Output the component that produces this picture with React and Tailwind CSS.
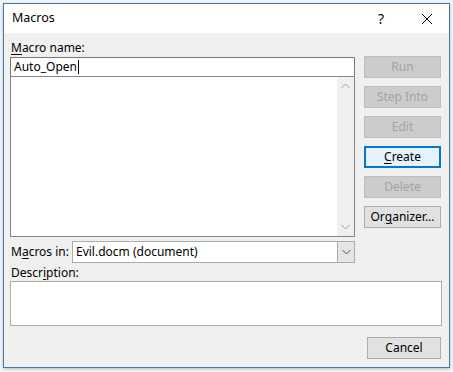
import React from 'react';

const font = { fontFamily: '"Noto Sans", "Open Sans", sans-serif' };

const Btn = ({ children, disabled, focused }) => (
  <div
    className={`h-[22px] flex items-center justify-center text-[12px] ${
      disabled
        ? 'bg-[#cccccc] border border-[#bfbfbf] text-[#a3a3a3]'
        : focused
        ? 'bg-[#e5f1fb] border-2 border-[#0078d7] text-black'
        : 'bg-[#e1e1e1] border border-[#adadad] text-black'
    }`}
  >
    {children}
  </div>
);

const Chevron = ({ up, color = '#a0a0a0' }) => (
  <svg width="9" height="6" viewBox="0 0 9 6">
    <path d={up ? 'M0.5 5 L4.5 1 L8.5 5' : 'M0.5 1 L4.5 5 L8.5 1'} fill="none" stroke={color} strokeWidth="1" />
  </svg>
);

export default function App() {
  return (
    <div className="w-[453px] h-[372px] bg-[#f3f6fa] p-[3px] pb-[4px]" style={font}>
      <div className="h-full flex flex-col border border-[#3f78b3] bg-[#f0f0f0] shadow-[0_1px_3px_rgba(0,0,0,0.25)]">
        {/* Title bar */}
        <div className="h-[29px] bg-white flex items-center pl-[8px] text-[12.5px] text-black">
          <span className="flex-1">Macros</span>
          <span className="w-[14px] text-center text-[14px] mr-[33px]">?</span>
          <svg width="12" height="12" viewBox="0 0 12 12" className="mr-[16px]">
            <path d="M1 1 L11 11 M11 1 L1 11" stroke="#000" strokeWidth="1" />
          </svg>
        </div>

        {/* Body */}
        <div className="flex-1 flex flex-col pl-[6px] pr-[7px]">
          <div className="flex gap-[9px]">
            <div className="w-[345px] flex flex-col">
              <div className="mt-[6px] h-[17px] leading-[17px] pl-px text-[12px]">
                <span className="underline underline-offset-2">M</span>acro name:
              </div>
              <div className="mt-px h-[20px] bg-white border border-[#7a7a7a] flex items-center pl-[3px] text-[12px]">
                Auto_Open
                <span className="inline-block w-px h-[14px] bg-black ml-px" />
              </div>
              <div className="-mt-px h-[161px] bg-white border border-[#828790] flex justify-end">
                <div className="w-[17px] bg-[#f0f0f0] flex flex-col items-center justify-between pt-[6px] pb-[6px]">
                  <Chevron up />
                  <Chevron />
                </div>
              </div>
            </div>
            <div className="w-[77px] flex flex-col gap-[8px] pt-[23px]">
              <Btn disabled>Run</Btn>
              <Btn disabled>Step Into</Btn>
              <Btn disabled>Edit</Btn>
              <Btn focused>
                <span className="underline underline-offset-2">C</span>reate
              </Btn>
              <Btn disabled>Delete</Btn>
              <Btn>
                Or<span className="underline underline-offset-2">g</span>anizer...
              </Btn>
            </div>
          </div>

          {/* Macros in */}
          <div className="mt-[4px] w-[345px] flex items-center text-[12px]">
            <div className="w-[62px] pl-px">
              M<span className="underline underline-offset-2">a</span>cros in:
            </div>
            <div className="flex-1 h-[22px] bg-white border border-[#adadad] flex items-center">
              <span className="flex-1 pl-[3px]">Evil.docm (document)</span>
              <div className="w-[17px] h-full bg-[#e5e5e5] border-l border-[#adadad] flex items-center justify-center">
                <Chevron color="#555555" />
              </div>
            </div>
          </div>

          {/* Description */}
          <div className="mt-px h-[17px] leading-[17px] pl-px text-[12px]">
            Descr<span className="underline underline-offset-2">i</span>ption:
          </div>
          <div className="h-[45px] bg-white border border-[#adadad]" />

          <div className="mt-[11px] flex justify-end pr-px">
            <div className="w-[74px]">
              <Btn>Cancel</Btn>
            </div>
          </div>
        </div>
      </div>
    </div>
  );
}
